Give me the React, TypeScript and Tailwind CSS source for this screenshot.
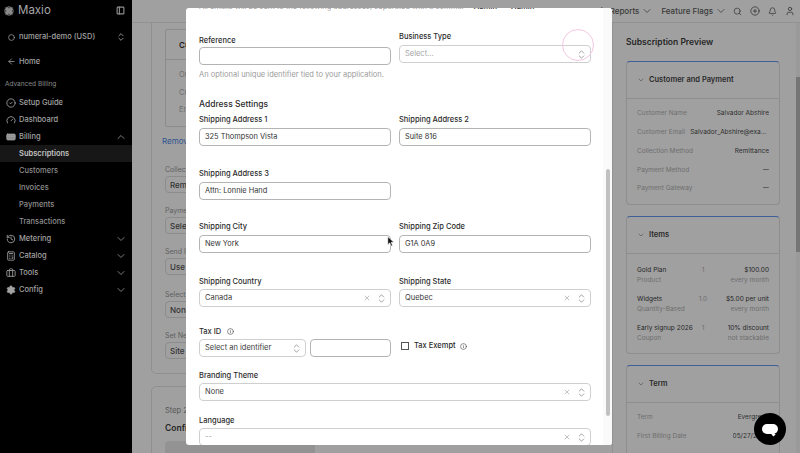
import {
  ArrowLeft,
  Bell,
  Briefcase,
  Calculator,
  ChevronDown,
  ChevronUp,
  ChevronsUpDown,
  Circle,
  CircleCheck,
  CirclePlus,
  CreditCard,
  Gauge,
  History,
  Info,
  PanelLeft,
  Search,
  Settings,
  User,
  X,
} from "lucide-react"
import type { ReactNode } from "react"

function NavRow({ icon, label, chevron }: { icon?: ReactNode; label: string; chevron?: "up" | "down" }) {
  return (
    <div className="flex h-[17px] items-center pl-[3px] pr-[5px] text-[#a3a3a3]">
      <div className="flex w-[16px] justify-center">{icon}</div>
      <span className="flex-1 text-[7.5px] font-medium">{label}</span>
      {chevron === "up" && <ChevronUp className="h-[12px] w-[12px]" strokeWidth={1.5} />}
      {chevron === "down" && <ChevronDown className="h-[12px] w-[12px]" strokeWidth={1.5} />}
    </div>
  )
}

function SubRow({ label, active }: { label: string; active?: boolean }) {
  return (
    <div className={active ? "flex h-[17px] items-center bg-[#171717] pl-[19px] text-[7.5px] font-semibold text-[#c4c4c4]" : "flex h-[17px] items-center pl-[19px] text-[7.5px] font-medium text-[#8f8f8f]"}>
      {label}
    </div>
  )
}

function Sidebar() {
  return (
    <aside className="flex h-[453px] w-[132px] shrink-0 flex-col bg-black">
      <div className="flex h-[21px] items-center pl-[4px] pr-[7px]">
        <svg viewBox="0 0 12 12" className="h-[10px] w-[10px] text-[#8a8a8a]" stroke="currentColor" strokeWidth="1.3">
          <path d="M6 0v12M0 6h12M1.8 1.8l8.4 8.4M10.2 1.8l-8.4 8.4M3.5 .8l5 10.4M8.5 .8l-5 10.4M.8 3.5l10.4 5M.8 8.5l10.4-5" />
        </svg>
        <span className="ml-[4px] flex-1 text-[11.5px] text-[#a8a8a8]">Maxio</span>
        <PanelLeft className="h-[9px] w-[9px] text-[#8f8f8f]" strokeWidth={3} />
      </div>
      <div className="mt-[7px] flex h-[18px] items-center pl-[3px] pr-[6px] text-[#a3a3a3]">
        <div className="flex w-[16px] justify-center">
          <Circle className="h-[7px] w-[7px]" strokeWidth={2.5} />
        </div>
        <span className="flex-1 text-[7.5px] font-medium">numeral-demo (USD)</span>
        <ChevronsUpDown className="h-[10px] w-[10px]" />
      </div>
      <div className="mt-[7px]">
        <NavRow icon={<ArrowLeft className="h-[9px] w-[9px]" />} label="Home" />
      </div>
      <div className="mt-[7px] flex h-[16px] items-center pl-[5px] text-[6.5px] text-[#8a8a8a]">Advanced Billing</div>
      <div className="mt-[1px]">
        <NavRow icon={<CircleCheck className="h-[10px] w-[10px]" />} label="Setup Guide" />
        <NavRow icon={<Gauge className="h-[10px] w-[10px]" />} label="Dashboard" />
        <NavRow icon={<CreditCard className="h-[10px] w-[10px]" fill="#8f8f8f" />} label="Billing" chevron="up" />
        <SubRow label="Subscriptions" active />
        <SubRow label="Customers" />
        <SubRow label="Invoices" />
        <SubRow label="Payments" />
        <SubRow label="Transactions" />
        <NavRow icon={<History className="h-[10px] w-[10px]" />} label="Metering" chevron="down" />
        <NavRow icon={<Calculator className="h-[10px] w-[10px]" />} label="Catalog" chevron="down" />
        <NavRow icon={<Briefcase className="h-[10px] w-[10px]" />} label="Tools" chevron="down" />
        <NavRow icon={<Settings className="h-[10px] w-[10px]" fill="#a3a3a3" />} label="Config" chevron="down" />
      </div>
    </aside>
  )
}

function TopBar() {
  return (
    <div className="flex h-[23px] items-center justify-end border-b border-[#919191] pr-[5px] text-[8px] font-medium text-[#3a3a3a]">
      <span>Admin Reports</span>
      <ChevronDown className="ml-[2px] h-[12px] w-[12px]" strokeWidth={1.5} />
      <span className="ml-[8px]">Feature Flags</span>
      <ChevronDown className="ml-[2px] h-[12px] w-[12px]" strokeWidth={1.5} />
      <Search className="ml-[6px] h-[9px] w-[9px]" />
      <CirclePlus className="ml-[8px] h-[10px] w-[10px]" />
      <Bell className="ml-[8px] h-[9px] w-[9px]" />
      <User className="ml-[8px] h-[10px] w-[10px]" />
    </div>
  )
}

function BackField({ label, value }: { label: string; value: string }) {
  return (
    <div className="mt-[13px]">
      <div className="whitespace-nowrap text-[7px] leading-[10px] text-[#5f5f5f]">{label}</div>
      <div className="mt-[1px] flex h-[17px] w-[150px] items-center rounded-[4px] border border-[#8c8c8c] pl-[4px] text-[8px] font-medium text-[#333]">
        {value}
      </div>
    </div>
  )
}

function BackLeft() {
  return (
    <div className="w-[150px]">
      <div className="h-[351px] rounded-b-[5px] border border-t-0 border-[#8f8f8f] pl-[13px] pt-[6px]">
        <div className="h-[98px] w-[150px] rounded-[2px] border border-[#8c8c8c]">
          <div className="flex h-[30px] items-center border-b border-[#8c8c8c] pl-[13px] text-[8px] font-semibold text-[#222]">Customer</div>
          <div className="pl-[13px] pt-[6px] text-[7.5px] leading-[17.5px] text-[#6d6d6d]">
            <div>Order</div>
            <div>Customer</div>
            <div>Email</div>
          </div>
        </div>
        <div className="mt-[9px] -ml-[3px] text-[8px] leading-[10px] text-[#2f5590]">Remove</div>
        <div className="mt-[19px]">
          <BackField label="Collection" value="Remittance" />
          <BackField label="Payment" value="Select" />
          <BackField label="Send Invoice" value="Use" />
          <div className="pt-[2px]">
            <BackField label="Select" value="None" />
          </div>
          <BackField label="Set Next" value="Site" />
        </div>
      </div>
      <div className="mt-[12px] h-[90px] rounded-t-[5px] border border-[#8f8f8f] pl-[13px] pt-[19px]">
        <div className="text-[7.5px] leading-[10px] text-[#555]">Step 2</div>
        <div className="mt-[7px] text-[8.5px] font-semibold leading-[10px] text-[#262626]">Configure</div>
        <div className="mt-[8px] h-[40px] w-[150px] rounded-[4px] bg-[#939393]" />
      </div>
    </div>
  )
}

function PreviewCard({ title, children, h }: { title: string; children: ReactNode; h: string }) {
  return (
    <div className={`${h} overflow-hidden rounded-[4px] border border-[#8e8e8e] border-t-[#3f5f96]`}>
      <div className="flex h-[37px] items-center border-b border-[#8e8e8e] pl-[10px] text-[#2a2a2a]">
        <ChevronDown className="h-[8px] w-[8px] text-[#555]" />
        <span className="ml-[4px] text-[7.5px] font-semibold">{title}</span>
      </div>
      {children}
    </div>
  )
}

function KV({ k, v }: { k: string; v: string }) {
  return (
    <div className="flex h-[18.7px] items-center justify-between text-[6.5px]">
      <span className="whitespace-nowrap text-[#6e6e6e]">{k}</span>
      <span className="ml-[5px] min-w-0 truncate text-[#2e2e2e]">{v}</span>
    </div>
  )
}

function ItemRow({ name, sub, qty, price, period }: { name: string; sub: string; qty: string; price: string; period: string }) {
  return (
    <div className="grid h-[29px] grid-cols-[58px_16px_1fr] text-[6.5px] leading-[10px]">
      <div>
        <div className="whitespace-nowrap text-[#262626]">{name}</div>
        <div className="text-[#6e6e6e]">{sub}</div>
      </div>
      <div className="text-center text-[#6e6e6e]">{qty}</div>
      <div className="text-right">
        <div className="whitespace-nowrap text-[#262626]">{price}</div>
        <div className="whitespace-nowrap text-[#6e6e6e]">{period}</div>
      </div>
    </div>
  )
}

function Preview() {
  return (
    <div className="flex w-[188px] shrink-0 overflow-hidden">
      <div className="w-[184px] border-l border-[#929292] pl-[13px] pr-[16px] pt-[13px]">
        <div className="text-[8.5px] font-semibold leading-[12px] text-[#262626]">Subscription Preview</div>
        <div className="mt-[13px] space-y-[11px]">
          <PreviewCard title="Customer and Payment" h="h-[144px]">
            <div className="px-[10px] pt-[6px]">
              <KV k="Customer Name" v="Salvador Abshire" />
              <KV k="Customer Email" v="Salvador_Abshire@example.com" />
              <KV k="Collection Method" v="Remittance" />
              <KV k="Payment Method" v="—" />
              <KV k="Payment Gateway" v="—" />
            </div>
          </PreviewCard>
          <PreviewCard title="Items" h="h-[138px]">
            <div className="px-[10px] pt-[11px]">
              <ItemRow name="Gold Plan" sub="Product" qty="1" price="$100.00" period="every month" />
              <ItemRow name="Widgets" sub="Quantity-Based" qty="1.0" price="$5.00 per unit" period="every month" />
              <ItemRow name="Early signup 2026" sub="Coupon" qty="1" price="10% discount" period="not stackable" />
            </div>
          </PreviewCard>
          <PreviewCard title="Term" h="h-[120px]">
            <div className="px-[10px] pt-[6px]">
              <KV k="Term" v="Evergreen" />
              <KV k="First Billing Date" v="05/27/2026" />
            </div>
          </PreviewCard>
        </div>
      </div>
      <div className="h-[430px] w-[4px] bg-[#9a9a9a]">
        <div className="mt-[54px] h-[175px] bg-[#757575]" />
      </div>
    </div>
  )
}

function Label({ children }: { children: ReactNode }) {
  return <div className="text-[7.5px] font-medium leading-[11px] text-[#2b2b2b]">{children}</div>
}

function Input({ value, className }: { value?: string; className?: string }) {
  return (
    <div className={`flex h-[18px] items-center rounded-[4px] border border-[#b4b4b4] pl-[5px] text-[7.4px] text-[#333] ${className ?? ""}`}>
      {value}
    </div>
  )
}

function Select({ value, clear, muted, className }: { value: string; clear?: boolean; muted?: boolean; className?: string }) {
  return (
    <div className={`flex h-[18px] items-center rounded-[4px] border border-[#cfcfcf] pl-[5px] pr-[3px] text-[7.5px] ${muted ? "text-[#a3a3a3]" : "text-[#3a3a3a]"} ${className ?? ""}`}>
      <span className="flex-1">{value}</span>
      {clear && <X className="mr-[5px] h-[8px] w-[8px] text-[#a8a8a8]" />}
      <ChevronsUpDown className="h-[11px] w-[11px] text-[#777]" strokeWidth={1.5} />
    </div>
  )
}

function Field({ label, children, h }: { label: string; children: ReactNode; h: string }) {
  return (
    <div className={h}>
      <Label>{label}</Label>
      <div className="mt-[3px]">{children}</div>
    </div>
  )
}

function Modal() {
  return (
    <div className="absolute left-[186px] top-[8px] flex h-[437px] w-[426px] overflow-hidden rounded-[3px] bg-white">
      <div className="relative w-[417px] shrink-0 pl-[13px] pr-[12px]">
        <div className="-mt-[6px] h-[10px] whitespace-nowrap text-[7.5px] leading-[10px] text-[#9a9a9a]">
          All emails will be sent to the following addresses, separated with a comma. <span className="ml-[8px] font-semibold text-[#444]">Admin</span>
          <span className="ml-[14px] font-semibold text-[#444]">Admin</span>
        </div>
        <div className="mt-[15px] grid h-[69px] grid-cols-2 gap-x-[8px]">
          <div className="pt-[8px]">
            <Label>Reference</Label>
            <Input className="mt-[1px]" />
            <div className="mt-[5px] text-[7.5px] leading-[10px] text-[#9b9b9b]">An optional unique identifier tied to your application.</div>
          </div>
          <div className="pt-[4px]">
            <Label>Business Type</Label>
            <Select value="Select..." muted className="mt-[3px]" />
          </div>
        </div>
        <div className="mt-[2px] text-[8.5px] font-medium leading-[12px] text-[#2b2b2b]">Address Settings</div>
        <div className="mt-[4px] grid grid-cols-2 gap-x-[8px]">
          <Field label="Shipping Address 1" h="h-[54px]"><Input value="325 Thompson Vista" /></Field>
          <Field label="Shipping Address 2" h="h-[54px]"><Input value="Suite 816" /></Field>
          <Field label="Shipping Address 3" h="h-[53px]"><Input value="Attn: Lonnie Hand" /></Field>
          <div />
          <Field label="Shipping City" h="h-[55px]"><Input value="New York" /></Field>
          <Field label="Shipping Zip Code" h="h-[55px]"><Input value="G1A 0A9" /></Field>
          <Field label="Shipping Country" h="h-[50px]"><Select value="Canada" clear className="-mt-[1px]" /></Field>
          <Field label="Shipping State" h="h-[50px]"><Select value="Quebec" clear className="-mt-[1px]" /></Field>
        </div>
        <div className="h-[44px]">
          <div className="flex items-center gap-[6px]">
            <Label>Tax ID</Label>
            <Info className="h-[7px] w-[7px] text-[#444]" />
          </div>
          <div className="mt-[2px] flex items-center">
            <Select value="Select an identifier" className="w-[107px]" />
            <Input className="ml-[4px] w-[81px]" />
            <div className="mb-[4px] flex items-center">
              <div className="ml-[10px] h-[8px] w-[8px] border border-[#555]" />
              <span className="ml-[5px] text-[7.5px] font-medium text-[#2b2b2b]">Tax Exempt</span>
              <Info className="ml-[4px] h-[7px] w-[7px] text-[#444]" />
            </div>
          </div>
        </div>
        <Field label="Branding Theme" h="h-[45px]"><Select value="None" clear className="-mt-[1px]" /></Field>
        <Field label="Language" h="h-[30px]"><Select value="--" clear muted className="-mt-[1px]" /></Field>
      </div>
      <div className="flex w-[9px] bg-[#fafafa] pl-[3px]">
        <div className="mt-[161px] h-[247px] w-[4px] rounded-full bg-[#c1c1c1]" />
      </div>
    </div>
  )
}

export default function App() {
  return (
    <div className="relative flex h-[453px] w-[800px] overflow-hidden bg-[#a0a0a0] font-['Inter',sans-serif]">
      <Sidebar />
      <div className="flex w-[668px] flex-col overflow-hidden">
        <TopBar />
        <div className="flex flex-1 justify-between overflow-hidden">
          <div className="pl-[19px]">
            <BackLeft />
          </div>
          <Preview />
        </div>
      </div>
      <Modal />
      <div className="absolute left-[562px] top-[29px] h-[32px] w-[32px] rounded-full border border-[#f3c9e2]" />
      <svg viewBox="0 0 10 14" className="absolute left-[387px] top-[236px] h-[11px] w-[8px]">
        <path d="M1 1v10l2.5-2.3 1.8 4 1.6-.7-1.8-3.9H8.5z" fill="#111" stroke="#fff" strokeWidth="0.6" />
      </svg>
      <div className="absolute left-[754px] top-[413px] flex h-[32px] w-[32px] items-center justify-center rounded-full bg-black">
        <div className="relative h-[10px] w-[16px] rounded-[5px] bg-white">
          <div className="absolute bottom-[-2px] right-[3px] h-[3px] w-[3px] rotate-45 bg-white" />
        </div>
      </div>
    </div>
  )
}
